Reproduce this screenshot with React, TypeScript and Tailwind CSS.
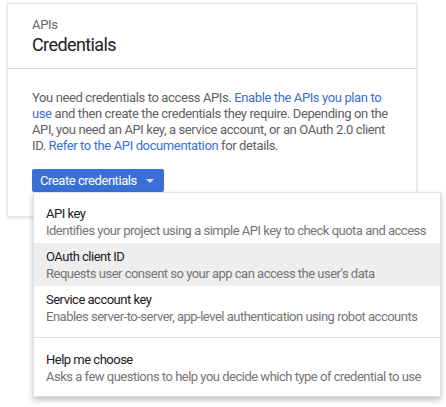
import { useState } from 'react';

const options = [
  {
    title: 'API key',
    description: 'Identifies your project using a simple API key to check quota and access',
  },
  {
    title: 'OAuth client ID',
    description: "Requests user consent so your app can access the user's data",
  },
  {
    title: 'Service account key',
    description: 'Enables server-to-server, app-level authentication using robot accounts',
  },
];

const MenuItem = ({
  title,
  description,
  active,
}: {
  title: string;
  description: string;
  active?: boolean;
}) => (
  <div
    className={`flex flex-col px-[12px] pt-[5px] pb-[4px] leading-[17px] tracking-[-0.5px] whitespace-nowrap cursor-pointer ${
      active ? 'bg-[#eeeeee]' : 'bg-white'
    }`}
  >
    <div className="text-[#212121]">{title}</div>
    <div className="text-[#757575]">{description}</div>
  </div>
);

const App = () => {
  const [open] = useState(true);

  return (
    <div className="min-h-[407px] bg-white pl-[7px] pt-[3px] font-['Roboto',sans-serif] text-[13px]">
      <div className="w-[410px] border border-[#e6e6e6] bg-white shadow-[0_1px_3px_rgba(0,0,0,0.12)]">
        <div className="border-b border-[#dadada] px-[24px] pt-[13px] pb-[11px]">
          <div className="text-[13px] leading-[16px] tracking-[-0.3px] text-[#5f6368]">APIs</div>
          <div className="text-[18px] leading-[24px] tracking-[-0.6px] text-[#212121]">Credentials</div>
        </div>
        <div className="px-[24px] pt-[21px] pb-[24px]">
          <p className="leading-[16px] tracking-[-0.38px] text-[#616161]">
            You need credentials to access APIs.{' '}
            <a className="text-[#3b6fd6]">Enable the APIs you plan to use</a> and
            then create the credentials they require. Depending on the API, you
            need an API key, a service account, or an OAuth 2.0 client ID.{' '}
            <a className="text-[#3b6fd6]">Refer to the API documentation</a> for
            details.
          </p>
          <div className="relative mt-[15px] inline-block">
            <button className="flex h-[23px] items-center gap-[9px] rounded-[2px] bg-[#3b6fd6] pl-[8px] pr-[10px] text-[13px] tracking-[-0.45px] text-white">
              <span>Create credentials</span>
              <svg width="8" height="4" viewBox="0 0 8 4" className="mt-[1px]">
                <path d="M0 0 L8 0 L4 4 Z" fill="#d6e0f5" />
              </svg>
            </button>
            {open && (
              <div className="absolute left-px top-full z-10 w-[408px] border border-[#e3e3e3] bg-white py-[7px] shadow-[0_3px_6px_rgba(0,0,0,0.25)]">
                {options.map((o, i) => (
                  <MenuItem
                    key={o.title}
                    title={o.title}
                    description={o.description}
                    active={i === 1}
                  />
                ))}
                <div className="my-[8px] border-t border-[#e0e0e0]" />
                <MenuItem
                  title="Help me choose"
                  description="Asks a few questions to help you decide which type of credential to use"
                />
              </div>
            )}
          </div>
        </div>
      </div>
    </div>
  );
};

export default App;
